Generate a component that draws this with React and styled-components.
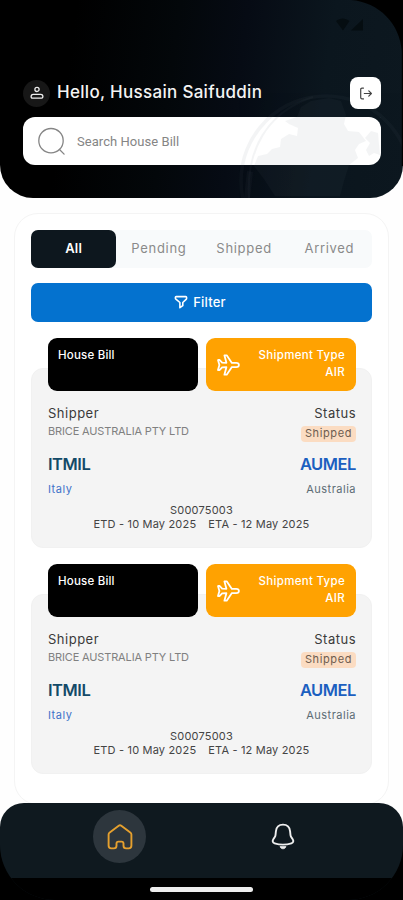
import styled, { createGlobalStyle } from "styled-components";

const GlobalStyle = createGlobalStyle`
  * {
    box-sizing: border-box;
  }

  body {
    margin: 0;
    background: #fefefe;
    font-family: "Inter", "Open Sans", sans-serif;
  }
`;

const Screen = styled.div`
  width: 403px;
  height: 900px;
  display: flex;
  flex-direction: column;
  overflow: hidden;
  background: #fefefe;
`;

const Header = styled.header`
  position: relative;
  flex: none;
  height: 198px;
  padding: 77px 22px 0 23px;
  border-radius: 0 0 33px 33px;
  overflow: hidden;
  background: linear-gradient(
    98deg,
    #000 18%,
    #03070a 42%,
    #060b14 58%,
    #0b161e 78%,
    #0d1820 100%
  );
`;

const Overlay = styled.svg`
  position: absolute;
  top: 0;
  left: 0;
  pointer-events: none;
`;

const Greeting = styled.div`
  position: relative;
  display: flex;
  align-items: center;
  height: 32px;
`;

const Avatar = styled.div`
  display: flex;
  align-items: center;
  justify-content: center;
  width: 27px;
  height: 27px;
  border-radius: 50%;
  background: #171717;
`;

const Hello = styled.h1`
  flex: 1;
  margin: 0 0 3px 7px;
  color: #f4f4f4;
  font-size: 17px;
  font-weight: 500;
  line-height: 24px;
  letter-spacing: 0.3px;
  white-space: nowrap;
`;

const LogoutButton = styled.button`
  display: flex;
  align-items: center;
  justify-content: center;
  width: 31px;
  height: 32px;
  padding: 0;
  border: none;
  border-radius: 8px;
  background: #fff;
`;

const SearchBox = styled.div`
  position: relative;
  display: flex;
  align-items: center;
  gap: 11px;
  height: 48px;
  margin-top: 8px;
  padding-left: 14px;
  border-radius: 12px;
  background: #fff;
  color: #858585;
  font-family: Roboto, sans-serif;
  font-size: 13px;
  letter-spacing: 0.05px;
`;

const Panel = styled.main`
  flex: none;
  width: 375px;
  height: 592px;
  margin: 15px 0 0 14px;
  padding: 16px 16px 0;
  border: 1px solid #f4f4f4;
  border-radius: 24px;
  background: #fff;
`;

const Tabs = styled.div`
  display: grid;
  grid-template-columns: repeat(4, 1fr);
  height: 38px;
  border-radius: 7px;
  background: #f8fafb;
`;

const Tab = styled.button`
  padding: 0 0 3px;
  border: none;
  border-radius: 7px;
  background: ${(props) => (props.$active ? "#0d171e" : "transparent")};
  color: ${(props) => (props.$active ? "#fff" : "#8a8a8a")};
  font-family: inherit;
  font-size: 13px;
  font-weight: ${(props) => (props.$active ? 600 : 400)};
  letter-spacing: ${(props) => (props.$active ? "0.2px" : "0.7px")};
`;

const FilterButton = styled.button`
  display: flex;
  align-items: center;
  justify-content: center;
  gap: 5px;
  width: 100%;
  height: 39px;
  margin-top: 15px;
  padding: 0 3px 2px 0;
  border: none;
  border-radius: 7px;
  background: #0472cf;
  color: #fff;
  font-family: inherit;
  font-size: 13px;
  font-weight: 500;
  letter-spacing: 0.2px;
`;

const Card = styled.article`
  height: 180px;
  margin-top: 46px;
  padding: 0 15px;
  border: 1px solid #f1f1f1;
  border-radius: 12px;
  background: #f4f4f4;
`;

const Tiles = styled.div`
  display: grid;
  grid-template-columns: 1fr 1fr;
  gap: 8px;
  height: 53px;
  margin: -31px 0 13px 1px;
`;

const Tile = styled.div`
  display: flex;
  align-items: center;
  justify-content: space-between;
  padding: 0 11px 0 10px;
  border-radius: 9px;
  background: ${(props) => props.$color};
  color: #fff;
  font-size: 11.5px;
  font-weight: 500;
  line-height: 17px;
`;

const TileText = styled.div`
  align-self: flex-start;
  padding-top: 9px;
  text-align: ${(props) => props.$align || "left"};
  letter-spacing: ${(props) => props.$spacing || "0"};
  white-space: nowrap;
`;

const Row = styled.div`
  display: flex;
  align-items: center;
  justify-content: space-between;
  height: ${(props) => props.$height}px;
  margin: ${(props) => props.$top || 0}px 0 0 1px;
`;

const Label = styled.span`
  color: #3a3a3a;
  font-size: 13px;
  letter-spacing: 0.5px;
`;

const Company = styled.span`
  color: #808080;
  font-size: 11px;
  letter-spacing: -0.15px;
`;

const Badge = styled.span`
  height: 16px;
  margin-top: 7px;
  padding: 0 4px;
  border-radius: 4px;
  background: #fbdcc2;
  color: #6e5c50;
  font-size: 11px;
  line-height: 15px;
  letter-spacing: 0.6px;
`;

const Port = styled.strong`
  color: ${(props) => props.$color};
  font-size: 16.5px;
  font-weight: 600;
  letter-spacing: -0.45px;
`;

const Country = styled.span`
  color: ${(props) => props.$color};
  font-size: 11px;
  letter-spacing: 0.5px;
`;

const Schedule = styled.div`
  margin-top: 6px;
  color: #444;
  font-size: 11px;
  line-height: 14px;
  letter-spacing: 0.18px;
  text-align: center;
  white-space: nowrap;
`;

const Dates = styled.div`
  display: flex;
  justify-content: center;
  gap: 12px;
`;

const BottomArea = styled.footer`
  flex: none;
  height: 97px;
  margin-top: -2px;
  z-index: 1;
  background: linear-gradient(#fefefe 24px, #000 24px);
`;

const BottomBar = styled.div`
  height: 97px;
  border-radius: 24px 24px 55px 55px;
  overflow: hidden;
  background: #0f191f;
`;

const NavItems = styled.nav`
  display: grid;
  grid-template-columns: 1fr 1fr;
  width: 327px;
  height: 75px;
  margin: 0 auto;
  padding-top: 7px;
  justify-items: center;
`;

const NavItem = styled.div`
  display: flex;
  align-items: center;
  justify-content: center;
  width: 53px;
  height: 53px;
  border-radius: 50%;
  background: ${(props) => (props.$active ? "#2d363d" : "transparent")};
`;

const GestureStrip = styled.div`
  display: flex;
  justify-content: center;
  height: 22px;
  padding-top: 9px;
  background: #000;

  &::after {
    content: "";
    width: 103px;
    height: 5px;
    border-radius: 3px;
    background: #ededed;
  }
`;

const PersonIcon = () => (
  <svg width="14" height="14" viewBox="0 0 14 14" fill="none" stroke="#eee" strokeWidth="1.3">
    <circle cx="7" cy="3.4" r="2.1" />
    <path d="M3.2 8.3h7.6c1.3 0 2.1 1.2 2.1 2.4 0 .9-.5 1.4-1.3 1.4H2.4c-.8 0-1.3-.5-1.3-1.4 0-1.2.8-2.4 2.1-2.4z" />
  </svg>
);

const LogoutIcon = () => (
  <svg
    width="14"
    height="13"
    viewBox="0 0 15 14"
    fill="none"
    stroke="#444"
    strokeWidth="1.3"
    strokeLinecap="round"
    strokeLinejoin="round"
  >
    <path d="M4.8 1.2H3.2c-.9 0-1.4.5-1.4 1.4v8.8c0 .9.5 1.4 1.4 1.400h1.600M5.700 7h7.600M10.500 4.200 13.300 7l-2.800 2.800" />
  </svg>
);

const SearchIcon = () => (
  <svg width="29" height="29" viewBox="0 0 29 29" fill="none" stroke="#858585" strokeWidth="1.3">
    <circle cx="14" cy="13.7" r="12.2" />
    <path d="m22.5 22.5 4.6 4.6" strokeLinecap="round" />
  </svg>
);

const FilterIcon = () => (
  <svg
    width="14"
    height="14"
    viewBox="0 0 14 14"
    fill="none"
    stroke="#fff"
    strokeWidth="1.6"
    strokeLinejoin="round"
  >
    <path d="M2.2 1.6h9.6c.5 0 .8.3.8.8v.9c0 .4-.2.8-.5 1.1L8.8 7.5v3.2L5.9 12.7V7.5L2.2 4.4c-.5-.4-.8-.7-.8-1.2v-.8c0-.5.3-.8.8-.8z" />
  </svg>
);

const PlaneIcon = () => (
  <svg
    width="24"
    height="22"
    viewBox="0 0 24 22"
    fill="none"
    stroke="#fff"
    strokeWidth="1.8"
    strokeLinejoin="round"
  >
    <path d="M2 6h1.700l2.400 2.700 4.300.1L8.400 1.300h2.300l5.200 7.600h4.300c1.600 0 2.700.9 2.700 2.100s-1.100 2.100-2.700 2.100h-4.300l-5.200 7.600H8.400l2-7.500-4.300.100L3.700 16H2l1.400-5z" />
  </svg>
);

const HomeIcon = () => (
  <svg
    width="26"
    height="26"
    viewBox="0 0 26 26"
    fill="none"
    stroke="#e5a02e"
    strokeWidth="1.9"
    strokeLinejoin="round"
  >
    <path d="M11.700 1.700 2.700 8.500c-.7.5-1.100 1.200-1.100 2v11.100c0 1.800 1 2.800 2.700 2.800h2.600c1.800 0 2.600-.9 2.600-2.600v-2.200c0-1.300.7-2 1.900-2h3.200c1.200 0 1.900.7 1.900 2v2.200c0 1.700.8 2.600 2.600 2.600h2.600c1.700 0 2.700-1 2.700-2.800V10.500c0-.8-.4-1.500-1.100-2l-9-6.800c-.8-.6-1.800-.6-2.600 0z" />
  </svg>
);

const BellIcon = () => (
  <svg
    width="24"
    height="27"
    viewBox="0 0 24 27"
    fill="none"
    stroke="#eee"
    strokeWidth="1.9"
    strokeLinejoin="round"
  >
    <path d="M12 1.600c-4.100 0-6.700 2.800-7.100 6.700l-.4 3.900c-.1.900-.5 1.600-1.100 2.400l-1.100 1.600c-1.200 1.900-.6 3.600 1.300 4.200 5.300 1.600 11.500 1.600 16.800 0 1.900-.6 2.500-2.300 1.300-4.200l-1.100-1.600c-.6-.8-1-1.500-1.100-2.400l-.4-3.900C18.700 4.400 16.100 1.600 12 1.600z" />
    <path d="M9 23.600c.9 2.900 5.100 2.900 6 0z" fill="#eee" strokeWidth="0.8" />
  </svg>
);

const Globe = ({ opacity = 1 }) => (
  <g opacity={opacity}>
    <g fill="none" stroke="#7f8a92" strokeOpacity="0.09">
      <circle cx="326" cy="181" r="85" strokeWidth="3.5" />
      <path d="M249 198c-3-48 18-86 64-101" strokeWidth="2" />
    </g>
    <g fill="#7f8a92" fillOpacity="0.09">
      <path d="M254 166l4-10 9-2 5-5 8-2 1-8 8-5 8 2 1-8-9-4-4-3 12-4 4-10 10-6 18-3 12 3 5 14-2 9 4 7 11 1 7 9-7 3-4 6 3 8-9 7-5 16-4 15h-65l-11-17z" />
      <path d="M371 131l7 2 2 22-6-2-5 3-3-6 4-7-5-5zM247 171l6 1-3 26h-6z" />
    </g>
  </g>
);

const HeaderArt = () => (
  <Overlay width="403" height="198" viewBox="0 0 403 198">
    <Globe opacity={0.6} />
    <path d="M336 21c4-3.5 9.500-3.500 13.500 0L343 30.500zM351 30.500h12V19z" fill="#050d11" />
    <path d="M351 0h52v166h-1.200V51C400 24 379 2 351 0z" fill="#000" />
  </Overlay>
);

// header artwork continues over the search field
const SearchArt = () => (
  <Overlay width="358" height="48" viewBox="23 117 358 48">
    <Globe />
  </Overlay>
);

const shipments = [
  {
    id: 1,
    type: "AIR",
    shipper: "BRICE AUSTRALIA PTY LTD",
    status: "Shipped",
    from: "ITMIL",
    fromCountry: "Italy",
    to: "AUMEL",
    toCountry: "Australia",
    reference: "S00075003",
    etd: "10 May 2025",
    eta: "12 May 2025",
  },
  {
    id: 2,
    type: "AIR",
    shipper: "BRICE AUSTRALIA PTY LTD",
    status: "Shipped",
    from: "ITMIL",
    fromCountry: "Italy",
    to: "AUMEL",
    toCountry: "Australia",
    reference: "S00075003",
    etd: "10 May 2025",
    eta: "12 May 2025",
  },
];

const ShipmentCard = ({ shipment }) => (
  <Card>
    <Tiles>
      <Tile $color="#000">
        <TileText $spacing="0.2px">House Bill</TileText>
      </Tile>
      <Tile $color="#ffa201">
        <PlaneIcon />
        <TileText $align="right" $spacing="0.3px">
          Shipment Type
          <br />
          {shipment.type}
        </TileText>
      </Tile>
    </Tiles>
    <Row $height={18}>
      <Label>Shipper</Label>
      <Label>Status</Label>
    </Row>
    <Row $height={17}>
      <Company>{shipment.shipper}</Company>
      <Badge>{shipment.status}</Badge>
    </Row>
    <Row $height={24} $top={13}>
      <Port $color="#134a68">{shipment.from}</Port>
      <Port $color="#1b5fc0">{shipment.to}</Port>
    </Row>
    <Row $height={16} $top={5}>
      <Country $color="#3f73c9">{shipment.fromCountry}</Country>
      <Country $color="#5d6c74">{shipment.toCountry}</Country>
    </Row>
    <Schedule>
      {shipment.reference}
      <Dates>
        <span>ETD - {shipment.etd}</span>
        <span>ETA - {shipment.eta}</span>
      </Dates>
    </Schedule>
  </Card>
);

const App = () => {
  return (
    <>
      <GlobalStyle />
      <Screen>
        <Header>
          <HeaderArt />
          <Greeting>
            <Avatar>
              <PersonIcon />
            </Avatar>
            <Hello>Hello, Hussain Saifuddin</Hello>
            <LogoutButton>
              <LogoutIcon />
            </LogoutButton>
          </Greeting>
          <SearchBox>
            <SearchIcon />
            Search House Bill
            <SearchArt />
          </SearchBox>
        </Header>

        <Panel>
          <Tabs>
            <Tab $active>All</Tab>
            <Tab>Pending</Tab>
            <Tab>Shipped</Tab>
            <Tab>Arrived</Tab>
          </Tabs>
          <FilterButton>
            <FilterIcon />
            Filter
          </FilterButton>
          {shipments.map((shipment) => (
            <ShipmentCard key={shipment.id} shipment={shipment} />
          ))}
        </Panel>

        <BottomArea>
          <BottomBar>
            <NavItems>
              <NavItem $active>
                <HomeIcon />
              </NavItem>
              <NavItem>
                <BellIcon />
              </NavItem>
            </NavItems>
            <GestureStrip />
          </BottomBar>
        </BottomArea>
      </Screen>
    </>
  );
};

export default App;
